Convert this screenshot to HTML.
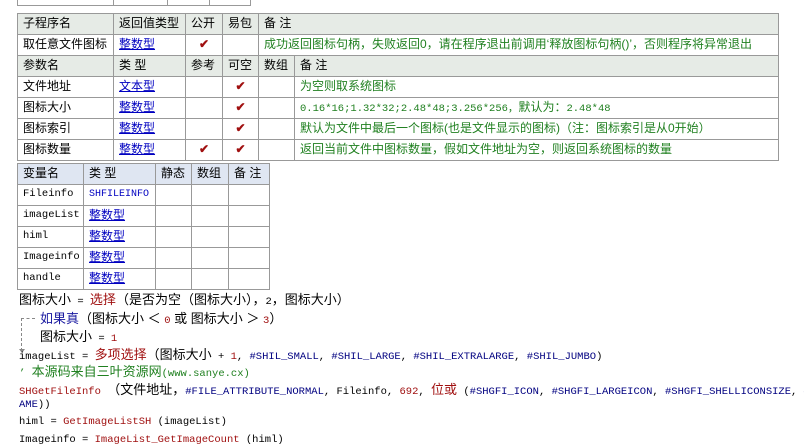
<!DOCTYPE html>
<html><head><meta charset="utf-8"><style>
body{margin:0;width:804px;height:441px;overflow:hidden;background:#fff;font-family:"Liberation Sans","Noto Sans CJK SC",sans-serif;font-size:12px;color:#000;position:relative}
.c{position:absolute;border:1px solid #999;box-sizing:border-box;padding-left:5px;line-height:19px;white-space:nowrap;overflow:hidden}
.h{background:#e6ebe6}
.hb{background:#dfe6f2}
.b{color:#0000c0;text-decoration:underline}
.g{color:#208020}
.ck{color:#a01010;text-align:center;padding:0;font-size:12px;font-weight:bold}
.m{font-family:"Liberation Mono","Noto Sans CJK SC",monospace;font-size:10.5px}
.l{position:absolute;left:19px;white-space:nowrap;line-height:16px}
.r{color:#a01010}
.n{color:#000080}
.cj{font-size:13px;font-family:"Liberation Sans","Noto Sans CJK SC",sans-serif}
</style></head><body>
<div class="c" style="left:17px;top:-10px;width:97px;height:16px"></div>
<div class="c" style="left:113px;top:-10px;width:55px;height:16px"></div>
<div class="c" style="left:167px;top:-10px;width:43px;height:16px"></div>
<div class="c" style="left:209px;top:-10px;width:42px;height:16px"></div>

<div class="c h" style="left:17px;top:13px;width:97px;height:22px">子程序名</div>
<div class="c h" style="left:113px;top:13px;width:73px;height:22px">返回值类型</div>
<div class="c h" style="left:185px;top:13px;width:38px;height:22px">公开</div>
<div class="c h" style="left:222px;top:13px;width:37px;height:22px">易包</div>
<div class="c h" style="left:258px;top:13px;width:521px;height:22px">备 注</div>

<div class="c" style="left:17px;top:34px;width:97px;height:22px">取任意文件图标</div>
<div class="c b" style="left:113px;top:34px;width:73px;height:22px">整数型</div>
<div class="c ck" style="left:185px;top:34px;width:38px;height:22px">✔</div>
<div class="c" style="left:222px;top:34px;width:37px;height:22px"></div>
<div class="c g" style="left:258px;top:34px;width:521px;height:22px">成功返回图标句柄，失败返回0，请在程序退出前调用‘释放图标句柄()’，否则程序将异常退出</div>

<div class="c h" style="left:17px;top:55px;width:97px;height:22px">参数名</div>
<div class="c h" style="left:113px;top:55px;width:73px;height:22px">类 型</div>
<div class="c h" style="left:185px;top:55px;width:38px;height:22px">参考</div>
<div class="c h" style="left:222px;top:55px;width:37px;height:22px">可空</div>
<div class="c h" style="left:258px;top:55px;width:37px;height:22px">数组</div>
<div class="c h" style="left:294px;top:55px;width:485px;height:22px">备 注</div>

<div class="c" style="left:17px;top:76px;width:97px;height:22px">文件地址</div>
<div class="c b" style="left:113px;top:76px;width:73px;height:22px">文本型</div>
<div class="c" style="left:185px;top:76px;width:38px;height:22px"></div>
<div class="c ck" style="left:222px;top:76px;width:37px;height:22px">✔</div>
<div class="c" style="left:258px;top:76px;width:37px;height:22px"></div>
<div class="c g" style="left:294px;top:76px;width:485px;height:22px">为空则取系统图标</div>

<div class="c" style="left:17px;top:97px;width:97px;height:22px">图标大小</div>
<div class="c b" style="left:113px;top:97px;width:73px;height:22px">整数型</div>
<div class="c" style="left:185px;top:97px;width:38px;height:22px"></div>
<div class="c ck" style="left:222px;top:97px;width:37px;height:22px">✔</div>
<div class="c" style="left:258px;top:97px;width:37px;height:22px"></div>
<div class="c g" style="left:294px;top:97px;width:485px;height:22px"><span class="m">0.16*16;1.32*32;2.48*48;3.256*256，</span>默认为：<span class="m">2.48*48</span></div>

<div class="c" style="left:17px;top:118px;width:97px;height:22px">图标索引</div>
<div class="c b" style="left:113px;top:118px;width:73px;height:22px">整数型</div>
<div class="c" style="left:185px;top:118px;width:38px;height:22px"></div>
<div class="c ck" style="left:222px;top:118px;width:37px;height:22px">✔</div>
<div class="c" style="left:258px;top:118px;width:37px;height:22px"></div>
<div class="c g" style="left:294px;top:118px;width:485px;height:22px">默认为文件中最后一个图标(也是文件显示的图标)（注：图标索引是从0开始）</div>

<div class="c" style="left:17px;top:139px;width:97px;height:22px">图标数量</div>
<div class="c b" style="left:113px;top:139px;width:73px;height:22px">整数型</div>
<div class="c ck" style="left:185px;top:139px;width:38px;height:22px">✔</div>
<div class="c ck" style="left:222px;top:139px;width:37px;height:22px">✔</div>
<div class="c" style="left:258px;top:139px;width:37px;height:22px"></div>
<div class="c g" style="left:294px;top:139px;width:485px;height:22px">返回当前文件中图标数量，假如文件地址为空，则返回系统图标的数量</div>

<div class="c hb" style="left:17px;top:163px;width:67px;height:22px">变量名</div>
<div class="c hb" style="left:83px;top:163px;width:73px;height:22px">类 型</div>
<div class="c hb" style="left:155px;top:163px;width:37px;height:22px">静态</div>
<div class="c hb" style="left:191px;top:163px;width:38px;height:22px">数组</div>
<div class="c hb" style="left:228px;top:163px;width:42px;height:22px">备 注</div>

<div class="c m" style="left:17px;top:184px;width:67px;height:22px">Fileinfo</div>
<div class="c m b" style="left:83px;top:184px;width:73px;height:22px;text-decoration:none;font-size:10px">SHFILEINFO</div>
<div class="c" style="left:155px;top:184px;width:37px;height:22px"></div><div class="c" style="left:191px;top:184px;width:38px;height:22px"></div><div class="c" style="left:228px;top:184px;width:42px;height:22px"></div>

<div class="c m" style="left:17px;top:205px;width:67px;height:22px">imageList</div>
<div class="c b" style="left:83px;top:205px;width:73px;height:22px">整数型</div>
<div class="c" style="left:155px;top:205px;width:37px;height:22px"></div><div class="c" style="left:191px;top:205px;width:38px;height:22px"></div><div class="c" style="left:228px;top:205px;width:42px;height:22px"></div>

<div class="c m" style="left:17px;top:226px;width:67px;height:22px">himl</div>
<div class="c b" style="left:83px;top:226px;width:73px;height:22px">整数型</div>
<div class="c" style="left:155px;top:226px;width:37px;height:22px"></div><div class="c" style="left:191px;top:226px;width:38px;height:22px"></div><div class="c" style="left:228px;top:226px;width:42px;height:22px"></div>

<div class="c m" style="left:17px;top:247px;width:67px;height:22px">Imageinfo</div>
<div class="c b" style="left:83px;top:247px;width:73px;height:22px">整数型</div>
<div class="c" style="left:155px;top:247px;width:37px;height:22px"></div><div class="c" style="left:191px;top:247px;width:38px;height:22px"></div><div class="c" style="left:228px;top:247px;width:42px;height:22px"></div>

<div class="c m" style="left:17px;top:268px;width:67px;height:22px">handle</div>
<div class="c b" style="left:83px;top:268px;width:73px;height:22px">整数型</div>
<div class="c" style="left:155px;top:268px;width:37px;height:22px"></div><div class="c" style="left:191px;top:268px;width:38px;height:22px"></div><div class="c" style="left:228px;top:268px;width:42px;height:22px"></div>

<div class="l m" style="top:292px"><span class="cj">图标大小</span> = <span class="cj r">选择</span><span class="cj">（是否为空（图标大小），</span>2<span class="cj">，图标大小）</span></div>
<div style="position:absolute;left:21px;top:318px;width:14px;border-top:1px dashed #888"></div>
<div style="position:absolute;left:21px;top:318px;height:33px;border-left:1px dashed #888"></div>
<div style="position:absolute;left:19px;top:349px;width:0;height:0;border-left:3px solid transparent;border-right:3px solid transparent;border-top:4px solid #888"></div>
<div class="l m" style="top:311px;left:40px"><span class="cj" style="color:#1a1aa0">如果真</span><span class="cj">（图标大小 ＜ </span><span class="r">0</span><span class="cj"> 或 图标大小 ＞ </span><span class="r">3</span><span class="cj">）</span></div>
<div class="l m" style="top:329px;left:40px"><span class="cj">图标大小</span> = <span class="r">1</span></div>
<div class="l m" style="top:347px">imageList = <span class="cj r">多项选择</span><span class="cj">（图标大小</span> + <span class="r">1</span>, <span class="n">#SHIL_SMALL</span>, <span class="n">#SHIL_LARGE</span>, <span class="n">#SHIL_EXTRALARGE</span>, <span class="n">#SHIL_JUMBO</span>)</div>
<div class="l m g" style="top:364px">’ <span class="cj">本源码来自三叶资源网</span>(www.sanye.cx)</div>
<div class="l m" style="top:382px"><span class="r">SHGetFileInfo</span> <span class="cj">（文件地址，</span><span class="n">#FILE_ATTRIBUTE_NORMAL</span>, Fileinfo, <span class="r">692</span>, <span class="cj r">位或</span> (<span class="n">#SHGFI_ICON</span>, <span class="n">#SHGFI_LARGEICON</span>, <span class="n">#SHGFI_SHELLICONSIZE</span>, <span class="n">#SHGFI_S</span></div>
<div class="l m" style="top:397px"><span class="n">AME</span>))</div>
<div class="l m" style="top:414px">himl = <span class="r">GetImageListSH</span> (imageList)</div>
<div class="l m" style="top:432px">Imageinfo = <span class="r">ImageList_GetImageCount</span> (himl)</div>
</body></html>
